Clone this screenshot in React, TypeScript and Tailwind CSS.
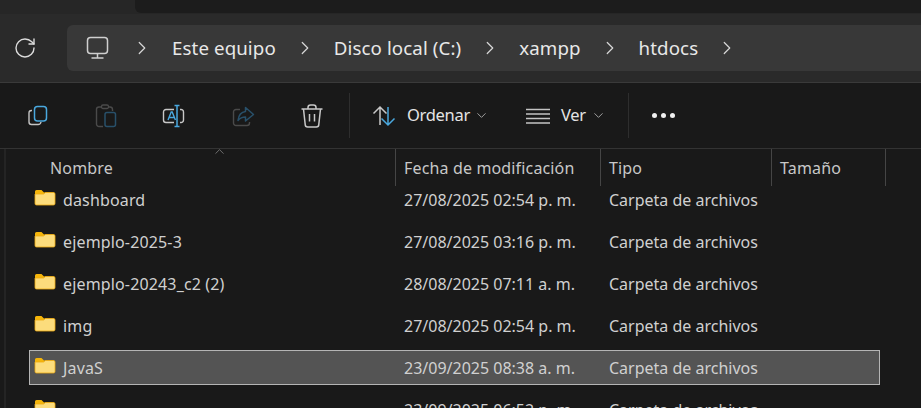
import { ChevronDown, ChevronRight, RotateCw } from "lucide-react";

const ROWS = [
  { name: "dashboard", date: "27/08/2025 02:54 p. m." },
  { name: "ejemplo-2025-3", date: "27/08/2025 03:16 p. m." },
  { name: "ejemplo-20243_c2 (2)", date: "28/08/2025 07:11 a. m." },
  { name: "img", date: "27/08/2025 02:54 p. m." },
  { name: "JavaS", date: "23/09/2025 08:38 a. m.", selected: true },
  { name: "", date: "23/09/2025 06:52 p. m." },
];

const CRUMBS = ["Este equipo", "Disco local (C:)", "xampp", "htdocs"];

function Folder() {
  return (
    <svg width="22" height="17" viewBox="0 0 22 17" className="-mt-[4px] shrink-0">
      <path d="M1 2.500A1.500 1.500 0 0 1 2.500 1h5L10 3.500h9.500A1.500 1.500 0 0 1 21 5v2H1z" fill="#f5b50a" />
      <path d="M1 5h8.500l2-1.500h8A1.500 1.500 0 0 1 21 5v9.500a1.500 1.500 0 0 1-1.500 1.500h-17A1.500 1.500 0 0 1 1 14.500z" fill="#fcdc7c" stroke="#eeaa10" strokeWidth="0.8" />
    </svg>
  );
}

function CopyIcon() {
  return (
    <svg width="24" height="24" viewBox="0 0 24 24" fill="none">
      <path d="M6 6.500H5.500A2.500 2.500 0 0 0 3 9v9a2.500 2.500 0 0 0 2.500 2.500H12a3 3 0 0 0 3-2.500" stroke="#c4c4c4" strokeWidth="1.4" />
      <rect x="8.500" y="2.500" width="12" height="14.500" rx="3" stroke="#4aa8de" strokeWidth="1.5" />
    </svg>
  );
}

function PasteIcon() {
  return (
    <svg width="24" height="26" viewBox="0 0 24 26" fill="none">
      <path d="M8 4H5a2.500 2.500 0 0 0-2.500 2.500V21A2.500 2.500 0 0 0 5 23.500h4" stroke="#4a4a4a" strokeWidth="1.4" />
      <path d="M14 4h2a2.500 2.500 0 0 1 2.500 2.500V8" stroke="#4a4a4a" strokeWidth="1.4" />
      <rect x="7.500" y="2" width="7" height="3.500" rx="1.500" stroke="#4a4a4a" strokeWidth="1.3" />
      <rect x="11" y="9.500" width="10.500" height="14" rx="2" stroke="#28506a" strokeWidth="1.5" />
    </svg>
  );
}

function RenameIcon() {
  return (
    <svg width="24" height="24" viewBox="0 0 24 24" fill="none">
      <path d="M12 5.500H4A2.500 2.500 0 0 0 1.500 8v8A2.500 2.500 0 0 0 4 18.500h8M18 5.500h.5A2.500 2.500 0 0 1 21.500 8v8a2.500 2.500 0 0 1-3 2.500H18" stroke="#c8c8c8" strokeWidth="1.4" />
      <path d="M6 16l3.200-8h1l3.200 8M7.200 13.500h5" stroke="#4aa8de" strokeWidth="1.4" />
      <path d="M12.500 1.500h5M15 1.500v21M12.500 22.500h5" stroke="#4aa8de" strokeWidth="1.5" />
    </svg>
  );
}

function ShareIcon() {
  return (
    <svg width="24" height="24" viewBox="0 0 24 24" fill="none">
      <path d="M9 5.500H5A2.500 2.500 0 0 0 2.500 8v11A2.500 2.500 0 0 0 5 21.500h11a2.500 2.500 0 0 0 2.500-2.500v-1" stroke="#4a4a4a" strokeWidth="1.4" />
      <path d="M14.500 3.500l8 7-8 6.500v-4c-3.500 0-5.500 1-7.500 3.500 .5-4.500 3-8.500 7.500-9z" stroke="#28506a" strokeWidth="1.5" strokeLinejoin="round" />
    </svg>
  );
}

function TrashIcon() {
  return (
    <svg width="24" height="26" viewBox="0 0 24 26" fill="none" stroke="#c8c8c8" strokeWidth="1.5">
      <path d="M1.500 6h21M8 6V4.500A2.500 2.500 0 0 1 10.500 2h3A2.500 2.500 0 0 1 16 4.500V6" />
      <path d="M3.500 6l1.700 15.500A2.500 2.500 0 0 0 7.700 24h8.600a2.500 2.500 0 0 0 2.500-2.500L20.500 6" />
      <path d="M9.500 11v7.500M14.500 11v7.500" />
    </svg>
  );
}

function SortIcon() {
  return (
    <svg width="24" height="22" viewBox="0 0 24 22" fill="none" strokeWidth="1.5">
      <path d="M8 20V2M1.500 8.500L8 2l6.500 6.500" stroke="#c8c8c8" />
      <path d="M16 2v18M9.500 13.500L16 20l6.500-6.500" stroke="#4aa8de" />
    </svg>
  );
}

function ViewIcon() {
  return (
    <svg width="24" height="16" viewBox="0 0 24 16" stroke="#c4c4c4" strokeWidth="1.4">
      <path d="M0 1.500h24M0 6h24M0 10.500h24M0 15h24" />
    </svg>
  );
}

function PcIcon() {
  return (
    <svg width="24" height="24" viewBox="0 0 24 24" fill="none" stroke="#cfcfcf" strokeWidth="1.5">
      <rect x="1.500" y="1.500" width="20" height="16" rx="3" />
      <path d="M11.500 17.500v4M5.500 22h12" />
    </svg>
  );
}

export default function App() {
  return (
    <div className="flex h-[408px] w-[921px] flex-col overflow-hidden bg-[#191919] font-['Noto_Sans','Open_Sans',sans-serif] text-[#dcdcdc]">
      {/* Tab strip */}
      <div className="h-[14px] shrink-0 bg-[#262626] pl-[135px]">
        <div className="h-[13px] rounded-bl-[6px] bg-[#1c1c1c]" />
      </div>

      {/* Address bar */}
      <div className="flex h-[69px] shrink-0 items-start border-b border-[#3a3a3a] bg-[#2a2a2a] pt-[11px]">
        <div className="flex h-[46px] w-[67px] items-center pl-[13px]">
          <RotateCw size={24} strokeWidth={1.4} className="text-[#dcdcdc]" />
        </div>
        <div className="flex h-[46px] flex-1 items-center rounded-l-[6px] bg-[#383838] pl-[19px] text-[18.700px] tracking-[0.1px] text-[#e8e8e8]">
          <PcIcon />
          <div className="w-[21px]" />
          <ChevronRight size={22} strokeWidth={1.3} className="text-[#d8d8d8]" />
          <div className="w-[19px]" />
          {CRUMBS.map((label) => (
            <div key={label} className="flex items-center">
              <span className="whitespace-nowrap">{label}</span>
              <div className="w-[18px]" />
              <ChevronRight size={22} strokeWidth={1.3} className="text-[#d8d8d8]" />
              <div className="w-[18px]" />
            </div>
          ))}
        </div>
      </div>

      {/* Command bar */}
      <div className="flex h-[66px] shrink-0 items-center border-b border-[#333333] pl-[26px] text-[16.500px] tracking-[-0.3px] text-[#e4e4e4]">
        <div className="flex w-[68px]"><CopyIcon /></div>
        <div className="flex w-[68px]"><PasteIcon /></div>
        <div className="flex w-[69px]"><RenameIcon /></div>
        <div className="flex w-[69px]"><ShareIcon /></div>
        <div className="flex w-[49px]"><TrashIcon /></div>
        <div className="h-[45px] w-px bg-[#2e2e2e]" />
        <div className="ml-[22px] flex w-[154px] items-center">
          <SortIcon />
          <span className="ml-[11px]">Ordenar</span>
          <ChevronDown size={15} strokeWidth={1.3} className="ml-[4px] text-[#bdbdbd]" />
        </div>
        <div className="flex w-[102px] items-center">
          <ViewIcon />
          <span className="ml-[11px]">Ver</span>
          <ChevronDown size={15} strokeWidth={1.3} className="ml-[5px] text-[#bdbdbd]" />
        </div>
        <div className="h-[45px] w-px bg-[#2e2e2e]" />
        <div className="ml-[23px] flex gap-[4px]">
          <span className="size-[5px] rounded-full bg-[#f0f0f0]" />
          <span className="size-[5px] rounded-full bg-[#f0f0f0]" />
          <span className="size-[5px] rounded-full bg-[#f0f0f0]" />
        </div>
      </div>

      {/* File list */}
      <div className="flex min-h-0 flex-1 border-l-[4px] border-[#191919]">
        <div className="w-[2px] shrink-0 bg-[#242424]" />
        <div className="min-w-0 flex-1 text-[16px] text-[#d0d0d0]">
          <div className="relative flex h-[37px] items-center tracking-[0.15px] text-[#c8c8c8]">
            <ChevronDown size={15} strokeWidth={1.2} className="absolute left-[206px] top-[-5px] rotate-180 text-[#8a8a8a]" />
            <div className="flex h-full w-[390px] items-center border-r border-[#454545] pl-[44px]">Nombre</div>
            <div className="flex h-full w-[205px] items-center border-r border-[#454545] pl-[8px]">Fecha de modificación</div>
            <div className="flex h-full w-[171px] items-center border-r border-[#454545] pl-[8px]">Tipo</div>
            <div className="flex h-full w-[114px] items-center border-r border-[#454545] pl-[8px]">Tamaño</div>
          </div>
          <div className="-mt-[7px]">
            {ROWS.map((row) => (
              <div key={row.date + row.name} className="flex h-[42px] items-start pt-[3px]">
                <div
                  className={`ml-[23px] flex h-[35px] w-[851px] items-center border ${
                    row.selected ? "border-[#b5b5b5] bg-[#545454]" : "border-transparent"
                  }`}
                >
                  <div className="flex w-[366px] items-center gap-[7px] pl-[4px]">
                    <Folder />
                    <span className="whitespace-nowrap tracking-[0.15px]">{row.name}</span>
                  </div>
                  <div className="w-[205px] whitespace-nowrap pl-[8px]">{row.date}</div>
                  <div className="whitespace-nowrap pl-[8px]">Carpeta de archivos</div>
                </div>
              </div>
            ))}
          </div>
        </div>
      </div>
    </div>
  );
}
